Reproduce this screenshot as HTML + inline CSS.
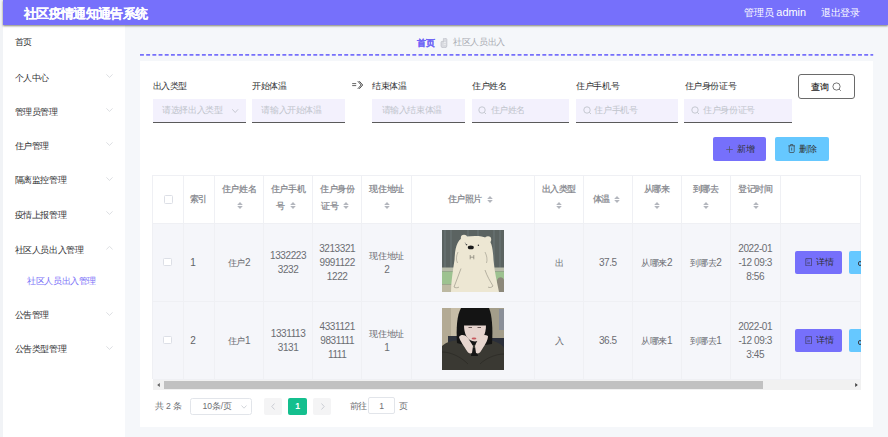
<!DOCTYPE html>
<html><head><meta charset="utf-8">
<style>
*{margin:0;padding:0;box-sizing:border-box;}
html,body{width:888px;height:437px;overflow:hidden;background:#f5f7fa;font-family:"Liberation Sans",sans-serif;}
.abs{position:absolute;}
#strip{left:0;top:0;width:2.7px;height:437px;background:#f1f3f6;}
#side{left:2.7px;top:0;width:122.6px;height:437px;background:#fff;}
#hdr{left:2.7px;top:0;width:885.3px;height:24.8px;background:#7670fb;box-shadow:0 1px 2px rgba(30,30,0,.55);z-index:5;}
#hdr .t{position:absolute;left:21.2px;top:4.6px;font-size:12.6px;letter-spacing:-0.67px;font-weight:bold;-webkit-text-stroke:0.12px #fff;color:#fff;line-height:18px;white-space:nowrap;}
#hdr .r{position:absolute;top:4px;font-size:9.87px;color:#fff;line-height:17px;white-space:nowrap;}
.mi{position:absolute;left:14.6px;font-size:9.1px;letter-spacing:-0.37px;color:#303133;line-height:12px;white-space:nowrap;}
.chev{position:absolute;left:106.4px;}
#card{left:140.2px;top:61.3px;width:732.6px;height:365.3px;background:#fff;}
.lbl{position:absolute;top:80.3px;font-size:8.63px;letter-spacing:-0.37px;color:#303133;line-height:12px;white-space:nowrap;}
.inp{position:absolute;top:98.5px;height:24.3px;background:#f3f1fd;border-bottom:1.2px solid #5a5a5a;}
.ph{position:absolute;top:104.3px;font-size:8.63px;letter-spacing:-0.37px;color:#c0c4cc;line-height:12px;white-space:nowrap;}
.cj{letter-spacing:-0.37px;}
</style></head><body>
<div id="strip" class="abs"></div>
<div id="side" class="abs"></div>
<div id="hdr" class="abs">
  <div class="t">社区疫情通知通告系统</div>
  <div class="r" style="left:741.3px"><span style="letter-spacing:-0.13px;font-size:10.2px">管理员</span> <span style="font-size:10.9px">admin</span></div>
  <div class="r" style="left:818px;letter-spacing:-0.13px;font-size:10.2px">退出登录</div>
</div>
<!-- sidebar menu -->
<div class="mi" style="top:36.3px">首页</div>
<div class="mi" style="top:71.5px">个人中心</div>
<div class="mi" style="top:105.5px">管理员管理</div>
<div class="mi" style="top:139.8px">住户管理</div>
<div class="mi" style="top:174.3px">隔离监控管理</div>
<div class="mi" style="top:208.7px">疫情上报管理</div>
<div class="mi" style="top:243.7px">社区人员出入管理</div>
<div class="mi" style="top:275.1px;left:27px;color:#7a70f8">社区人员出入管理</div>
<div class="mi" style="top:309.4px">公告管理</div>
<div class="mi" style="top:343.0px">公告类型管理</div>
<svg class="chev" style="top:73.5px" width="7" height="4" viewBox="0 0 7 4"><path d="M0.4 0.4 L3.5 3.4 L6.6 0.4" fill="none" stroke="#cfd1d6" stroke-width="0.7"/></svg>
<svg class="chev" style="top:107.9px" width="7" height="4" viewBox="0 0 7 4"><path d="M0.4 0.4 L3.5 3.4 L6.6 0.4" fill="none" stroke="#cfd1d6" stroke-width="0.7"/></svg>
<svg class="chev" style="top:142.3px" width="7" height="4" viewBox="0 0 7 4"><path d="M0.4 0.4 L3.5 3.4 L6.6 0.4" fill="none" stroke="#cfd1d6" stroke-width="0.7"/></svg>
<svg class="chev" style="top:176.8px" width="7" height="4" viewBox="0 0 7 4"><path d="M0.4 0.4 L3.5 3.4 L6.6 0.4" fill="none" stroke="#cfd1d6" stroke-width="0.7"/></svg>
<svg class="chev" style="top:211.2px" width="7" height="4" viewBox="0 0 7 4"><path d="M0.4 0.4 L3.5 3.4 L6.6 0.4" fill="none" stroke="#cfd1d6" stroke-width="0.7"/></svg>
<svg class="chev" style="top:246.2px" width="7" height="4" viewBox="0 0 7 4"><path d="M0.4 3.4 L3.5 0.4 L6.6 3.4" fill="none" stroke="#cfd1d6" stroke-width="0.7"/></svg>
<svg class="chev" style="top:311.9px" width="7" height="4" viewBox="0 0 7 4"><path d="M0.4 0.4 L3.5 3.4 L6.6 0.4" fill="none" stroke="#cfd1d6" stroke-width="0.7"/></svg>
<svg class="chev" style="top:345.5px" width="7" height="4" viewBox="0 0 7 4"><path d="M0.4 0.4 L3.5 3.4 L6.6 0.4" fill="none" stroke="#cfd1d6" stroke-width="0.7"/></svg>

<!-- breadcrumb -->
<div class="abs" style="left:417.2px;top:36.6px;font-size:8.63px;letter-spacing:-0.37px;line-height:12px;color:#7066f6;font-weight:bold;-webkit-text-stroke:0.15px #7066f6">首页</div>
<svg class="abs" style="left:440px;top:37.6px" width="8" height="10.2" viewBox="0 0 8 10.2"><path d="M3.4 0.6 Q3.4 0.2 4.6 0.2 Q6.9 0.2 6.9 1.5 V8 Q6.9 9.9 4 9.9 Q1 9.9 1 8 V4.4 Q1 3.3 2.2 3.3 Q3.4 3.3 3.4 4.2 Z" fill="#d9dbe0" stroke="#b8bbc2" stroke-width="0.6"/><path d="M3.6 4.5 H5.8 M3.6 6.4 H5.8" stroke="#f4f5f8" stroke-width="0.7"/></svg>
<div class="abs" style="left:453px;top:36.3px;font-size:8.63px;letter-spacing:-0.37px;line-height:12px;color:#a8abb2">社区人员出入</div>
<svg class="abs" style="left:140.1px;top:53px" width="734" height="4" viewBox="0 0 734 4"><line x1="0" y1="1.8" x2="733.2" y2="1.8" stroke="#7670fb" stroke-width="1.7" stroke-dasharray="3.9 2.29"/></svg>

<div id="card" class="abs"></div>
<!-- form -->
<div class="lbl" style="left:152.5px">出入类型</div>
<div class="lbl" style="left:252px">开始体温</div>
<svg class="abs" style="left:351px;top:80px" width="14" height="10" viewBox="0 0 14 10"><path d="M1.2 3.6 H5.2 M1.2 5.6 H5.2" stroke="#555" stroke-width="0.9"/><path d="M6.8 1.2 L10.2 5 L6.8 8.8 M8.3 1.2 L11.7 5 L8.3 8.8" fill="none" stroke="#3c3c3c" stroke-width="0.9"/></svg>
<div class="lbl" style="left:372px">结束体温</div>
<div class="lbl" style="left:472px">住户姓名</div>
<div class="lbl" style="left:576px">住户手机号</div>
<div class="lbl" style="left:684.5px">住户身份证号</div>
<div class="inp" style="left:152.5px;width:93.5px"></div>
<div class="inp" style="left:252px;width:93px"></div>
<div class="inp" style="left:372px;width:93.4px"></div>
<div class="inp" style="left:472px;width:97.4px"></div>
<div class="inp" style="left:575.8px;width:102.4px"></div>
<div class="inp" style="left:684.4px;width:107.6px"></div>
<div class="ph" style="left:162px">请选择出入类型</div>
<div class="ph" style="left:261.3px">请输入开始体温</div>
<div class="ph" style="left:381.6px">请输入结束体温</div>
<div class="ph" style="left:490.6px">住户姓名</div>
<div class="ph" style="left:594.4px">住户手机号</div>
<div class="ph" style="left:703px">住户身份证号</div>
<!-- form icons -->
<svg class="abs" style="left:232.4px;top:108.6px" width="6.4" height="4" viewBox="0 0 6.4 4"><path d="M0.3 0.3 L3.2 3.5 L6.1 0.3" fill="none" stroke="#b4b7bf" stroke-width="0.7"/></svg>
<svg class="abs" style="left:478px;top:105.5px" width="9" height="9" viewBox="0 0 9 9"><circle cx="4" cy="4" r="3.2" fill="none" stroke="#c0c4cc" stroke-width="0.9"/><path d="M6.3 6.3 L8 8" stroke="#c0c4cc" stroke-width="0.9"/></svg>
<svg class="abs" style="left:582.5px;top:105.5px" width="9" height="9" viewBox="0 0 9 9"><circle cx="4" cy="4" r="3.2" fill="none" stroke="#c0c4cc" stroke-width="0.9"/><path d="M6.3 6.3 L8 8" stroke="#c0c4cc" stroke-width="0.9"/></svg>
<svg class="abs" style="left:691px;top:105.5px" width="9" height="9" viewBox="0 0 9 9"><circle cx="4" cy="4" r="3.2" fill="none" stroke="#c0c4cc" stroke-width="0.9"/><path d="M6.3 6.3 L8 8" stroke="#c0c4cc" stroke-width="0.9"/></svg>
<!-- query button -->
<div class="abs" style="left:798.3px;top:73.8px;width:56.5px;height:24.9px;border:1.1px solid #6a6a6a;border-radius:3px;background:#fff"></div>
<div class="abs" style="left:811px;top:80.7px;font-size:8.63px;letter-spacing:-0.37px;line-height:12px;color:#222;-webkit-text-stroke:0.15px #222">查询</div>
<svg class="abs" style="left:832px;top:81.5px" width="10" height="10" viewBox="0 0 10 10"><circle cx="4.5" cy="4.5" r="3.6" fill="none" stroke="#4a4a4a" stroke-width="0.75"/><path d="M7.1 7.1 L8.8 8.8" stroke="#4a4a4a" stroke-width="0.75"/></svg>
<!-- add / delete -->
<div class="abs" style="left:712.7px;top:137.3px;width:53.7px;height:23.4px;background:#7670fb;border-radius:2px"></div>
<div class="abs" style="left:775.2px;top:137.3px;width:53.8px;height:23.4px;background:#66c8ff;border-radius:2px"></div>
<svg class="abs" style="left:725.8px;top:145.5px" width="7" height="7" viewBox="0 0 7 7"><path d="M3.5 0.2 V6.8 M0.2 3.5 H6.8" stroke="#505050" stroke-width="0.65"/></svg>
<div class="abs" style="left:736.9px;top:143px;font-size:8.63px;letter-spacing:-0.37px;line-height:12px;color:#303133">新增</div>
<svg class="abs" style="left:787.7px;top:144.2px" width="7.4" height="9" viewBox="0 0 7.4 9"><path d="M0.4 1.8 H7 M2.6 1.8 V0.5 H4.8 V1.8 M1.2 1.8 V7.6 Q1.2 8.5 2 8.5 H5.4 Q6.2 8.5 6.2 7.6 V1.8 M3.7 3.6 V6.6" fill="none" stroke="#3a3a3a" stroke-width="0.7"/></svg>
<div class="abs" style="left:799px;top:143px;font-size:8.63px;letter-spacing:-0.37px;line-height:12px;color:#303133">删除</div>
<div class="abs" style="left:152.6px;top:174.7px;width:708.0px;height:48.3px;background:#fff;border-top:1px solid #eff0f4"></div>
<div class="abs" style="left:152.6px;top:223.0px;width:708.0px;height:156.4px;background:#f5f6fa"></div>
<div class="abs" style="left:152.6px;top:222.5px;width:708.0px;height:1px;background:#eff0f4"></div>
<div class="abs" style="left:152.6px;top:300.8px;width:708.0px;height:1px;background:#eff0f4"></div>
<div class="abs" style="left:152.6px;top:378.9px;width:708.0px;height:1px;background:#eff0f4"></div>
<div class="abs" style="left:152.1px;top:174.7px;width:1px;height:204.7px;background:#eff0f4"></div>
<div class="abs" style="left:182.7px;top:174.7px;width:1px;height:204.7px;background:#eff0f4"></div>
<div class="abs" style="left:213.9px;top:174.7px;width:1px;height:204.7px;background:#eff0f4"></div>
<div class="abs" style="left:263.2px;top:174.7px;width:1px;height:204.7px;background:#eff0f4"></div>
<div class="abs" style="left:312.0px;top:174.7px;width:1px;height:204.7px;background:#eff0f4"></div>
<div class="abs" style="left:361.4px;top:174.7px;width:1px;height:204.7px;background:#eff0f4"></div>
<div class="abs" style="left:411.1px;top:174.7px;width:1px;height:204.7px;background:#eff0f4"></div>
<div class="abs" style="left:533.8px;top:174.7px;width:1px;height:204.7px;background:#eff0f4"></div>
<div class="abs" style="left:582.9px;top:174.7px;width:1px;height:204.7px;background:#eff0f4"></div>
<div class="abs" style="left:631.8px;top:174.7px;width:1px;height:204.7px;background:#eff0f4"></div>
<div class="abs" style="left:680.7px;top:174.7px;width:1px;height:204.7px;background:#eff0f4"></div>
<div class="abs" style="left:729.9px;top:174.7px;width:1px;height:204.7px;background:#eff0f4"></div>
<div class="abs" style="left:779.5px;top:174.7px;width:1px;height:204.7px;background:#eff0f4"></div>
<div class="abs" style="left:860.1px;top:174.7px;width:1px;height:204.7px;background:#eff0f4"></div>
<div class="abs" style="left:164.3px;top:195.0px;width:8.6px;height:8.6px;border:1px solid #dcdfe6;border-radius:1.5px;background:#fff"></div>
<div class="abs" style="left:189.7px;top:192.8px;font-size:8.63px;line-height:12px;color:#7f8288;font-weight:500;-webkit-text-stroke:0.22px #84878d;letter-spacing:-0.37px;white-space:nowrap">索引</div>
<div class="abs" style="left:214.4px;top:183.1px;width:49.3px;text-align:center;font-size:10.0px;letter-spacing:-0.4px;line-height:12px;color:#7f8288;font-weight:500;-webkit-text-stroke:0.22px #84878d;white-space:nowrap"><span style="font-size:9.1px;letter-spacing:-0.37px;">住户姓名</span></div>
<svg class="abs" style="left:236.5px;top:202.3px" width="6" height="7" viewBox="0 0 6 7"><path d="M3 0 L5.8 2.9 H0.2 Z M3 7 L5.8 4.1 H0.2 Z" fill="#b3b6bd"/></svg>
<div class="abs" style="left:263.7px;top:183.1px;width:48.8px;text-align:center;font-size:10.0px;letter-spacing:-0.4px;line-height:12px;color:#7f8288;font-weight:500;-webkit-text-stroke:0.22px #84878d;white-space:nowrap"><span style="font-size:9.1px;letter-spacing:-0.37px;">住户手机</span></div>
<div class="abs" style="left:276.4px;top:199.5px;font-size:8.63px;line-height:12px;color:#7f8288;font-weight:500;-webkit-text-stroke:0.22px #84878d;letter-spacing:-0.37px;white-space:nowrap">号</div>
<svg class="abs" style="left:289.8px;top:202.3px" width="6" height="7" viewBox="0 0 6 7"><path d="M3 0 L5.8 2.9 H0.2 Z M3 7 L5.8 4.1 H0.2 Z" fill="#b3b6bd"/></svg>
<div class="abs" style="left:312.5px;top:183.1px;width:49.4px;text-align:center;font-size:10.0px;letter-spacing:-0.4px;line-height:12px;color:#7f8288;font-weight:500;-webkit-text-stroke:0.22px #84878d;white-space:nowrap"><span style="font-size:9.1px;letter-spacing:-0.37px;">住户身份</span></div>
<div class="abs" style="left:321.2px;top:199.5px;font-size:8.63px;line-height:12px;color:#7f8288;font-weight:500;-webkit-text-stroke:0.22px #84878d;letter-spacing:-0.37px;white-space:nowrap">证号</div>
<svg class="abs" style="left:343.2px;top:202.3px" width="6" height="7" viewBox="0 0 6 7"><path d="M3 0 L5.8 2.9 H0.2 Z M3 7 L5.8 4.1 H0.2 Z" fill="#b3b6bd"/></svg>
<div class="abs" style="left:361.9px;top:183.1px;width:49.7px;text-align:center;font-size:10.0px;letter-spacing:-0.4px;line-height:12px;color:#7f8288;font-weight:500;-webkit-text-stroke:0.22px #84878d;white-space:nowrap"><span style="font-size:9.1px;letter-spacing:-0.37px;">现住地址</span></div>
<svg class="abs" style="left:384.1px;top:202.3px" width="6" height="7" viewBox="0 0 6 7"><path d="M3 0 L5.8 2.9 H0.2 Z M3 7 L5.8 4.1 H0.2 Z" fill="#b3b6bd"/></svg>
<div class="abs" style="left:534.3px;top:183.1px;width:49.1px;text-align:center;font-size:10.0px;letter-spacing:-0.4px;line-height:12px;color:#7f8288;font-weight:500;-webkit-text-stroke:0.22px #84878d;white-space:nowrap"><span style="font-size:9.1px;letter-spacing:-0.37px;">出入类型</span></div>
<svg class="abs" style="left:556.2px;top:202.3px" width="6" height="7" viewBox="0 0 6 7"><path d="M3 0 L5.8 2.9 H0.2 Z M3 7 L5.8 4.1 H0.2 Z" fill="#b3b6bd"/></svg>
<div class="abs" style="left:632.3px;top:183.1px;width:48.9px;text-align:center;font-size:10.0px;letter-spacing:-0.4px;line-height:12px;color:#7f8288;font-weight:500;-webkit-text-stroke:0.22px #84878d;white-space:nowrap"><span style="font-size:9.1px;letter-spacing:-0.37px;">从哪来</span></div>
<svg class="abs" style="left:654.1px;top:202.3px" width="6" height="7" viewBox="0 0 6 7"><path d="M3 0 L5.8 2.9 H0.2 Z M3 7 L5.8 4.1 H0.2 Z" fill="#b3b6bd"/></svg>
<div class="abs" style="left:681.2px;top:183.1px;width:49.2px;text-align:center;font-size:10.0px;letter-spacing:-0.4px;line-height:12px;color:#7f8288;font-weight:500;-webkit-text-stroke:0.22px #84878d;white-space:nowrap"><span style="font-size:9.1px;letter-spacing:-0.37px;">到哪去</span></div>
<svg class="abs" style="left:703.2px;top:202.3px" width="6" height="7" viewBox="0 0 6 7"><path d="M3 0 L5.8 2.9 H0.2 Z M3 7 L5.8 4.1 H0.2 Z" fill="#b3b6bd"/></svg>
<div class="abs" style="left:730.4px;top:183.1px;width:49.6px;text-align:center;font-size:10.0px;letter-spacing:-0.4px;line-height:12px;color:#7f8288;font-weight:500;-webkit-text-stroke:0.22px #84878d;white-space:nowrap"><span style="font-size:9.1px;letter-spacing:-0.37px;">登记时间</span></div>
<svg class="abs" style="left:752.6px;top:202.3px" width="6" height="7" viewBox="0 0 6 7"><path d="M3 0 L5.8 2.9 H0.2 Z M3 7 L5.8 4.1 H0.2 Z" fill="#b3b6bd"/></svg>
<div class="abs" style="left:447.5px;top:192.8px;font-size:8.63px;line-height:12px;color:#7f8288;font-weight:500;-webkit-text-stroke:0.22px #84878d;letter-spacing:-0.37px;white-space:nowrap">住户照片</div>
<svg class="abs" style="left:486.9px;top:195.7px" width="6" height="7" viewBox="0 0 6 7"><path d="M3 0 L5.8 2.9 H0.2 Z M3 7 L5.8 4.1 H0.2 Z" fill="#b3b6bd"/></svg>
<div class="abs" style="left:592.5px;top:192.8px;font-size:8.63px;line-height:12px;color:#7f8288;font-weight:500;-webkit-text-stroke:0.22px #84878d;letter-spacing:-0.37px;white-space:nowrap">体温</div>
<svg class="abs" style="left:613.9px;top:195.7px" width="6" height="7" viewBox="0 0 6 7"><path d="M3 0 L5.8 2.9 H0.2 Z M3 7 L5.8 4.1 H0.2 Z" fill="#b3b6bd"/></svg>
<div class="abs" style="left:163.2px;top:257.6px;width:8.6px;height:8.6px;border:1px solid #dcdfe6;border-radius:1.5px;background:#fff"></div>
<div class="abs" style="left:190.3px;top:257.1px;font-size:10.0px;line-height:12px;color:#606266">1</div>
<div class="abs" style="left:214.4px;top:255.6px;width:49.3px;text-align:center;font-size:10.0px;letter-spacing:-0.4px;line-height:14.0px;color:#6b6d72;white-space:nowrap"><span style="font-size:9.1px;letter-spacing:-0.37px;">住户</span>2</div>
<div class="abs" style="left:263.7px;top:248.6px;width:48.8px;text-align:center;font-size:10.0px;letter-spacing:-0.4px;line-height:14.0px;color:#6b6d72;white-space:nowrap">1332223<br>3232</div>
<div class="abs" style="left:312.5px;top:241.6px;width:49.4px;text-align:center;font-size:10.0px;letter-spacing:-0.4px;line-height:14.0px;color:#6b6d72;white-space:nowrap">3213321<br>9991122<br>1222</div>
<div class="abs" style="left:361.9px;top:248.6px;width:49.7px;text-align:center;font-size:10.0px;letter-spacing:-0.4px;line-height:14.0px;color:#6b6d72;white-space:nowrap"><span style="font-size:9.1px;letter-spacing:-0.37px;">现住地址</span><br>2</div>
<svg class="abs" style="left:442.2px;top:229.5px" width="62" height="62" viewBox="0 0 62 62">
<rect width="62" height="62" fill="#5b6361"/>
<path d="M3 0V38 M9 0V38 M26 0V8 M36 0V8 M52 0V38 M58 0V38" stroke="#667070" stroke-width="1.6"/>
<rect x="0" y="37.5" width="62" height="4" fill="#b9bcaa"/>
<rect x="0" y="41.5" width="62" height="13" fill="#9dc290"/>
<rect x="0" y="54.5" width="62" height="7.5" fill="#bdb9a2"/>
<path d="M55 62 V50 C57 46 61 47 62 50 V62 Z" fill="#8c887a"/>
<circle cx="22" cy="8" r="3.2" fill="#ede7d3"/><circle cx="46" cy="9.5" r="3.2" fill="#ede7d3"/>
<path d="M9 62 C9 52 11 40 12.5 30 C13 18 15 8 24 6.5 C32 5.5 40 5.5 45 8 C50 11 51 20 51.5 30 C52.5 42 55 52 57 62 Z" fill="#ede7d3"/>
<ellipse cx="28.8" cy="17.4" rx="3" ry="1.9" fill="#1a1a1a"/>
<circle cx="24.6" cy="14.6" r="0.7" fill="#333"/><circle cx="36.4" cy="15.2" r="0.7" fill="#333"/>
<path d="M23 12.5 L24.5 15.5" stroke="#666" stroke-width="0.5"/>
<path d="M28.2 25 V29.3 M31.8 25 V29.3 M28.2 27.2 H31.8" stroke="#6b6a60" stroke-width="0.6"/>
<path d="M16 22 C14 26 14 30 15.5 33 M43 22 C45 26 45.5 30 44.5 33" fill="none" stroke="#9b978a" stroke-width="0.6"/>
<path d="M19 38.5 C17 45 14 51 12 57 C13 58 16 58 17 57 M43 40 C45 46 48 51 51 56 C50 57.5 47 58 46 57" fill="none" stroke="#8f8b7e" stroke-width="0.6"/>
</svg>
<div class="abs" style="left:534.3px;top:255.6px;width:49.1px;text-align:center;font-size:10.0px;letter-spacing:-0.4px;line-height:14.0px;color:#6b6d72;white-space:nowrap"><span style="font-size:9.1px;letter-spacing:-0.37px;">出</span></div>
<div class="abs" style="left:583.4px;top:255.6px;width:48.9px;text-align:center;font-size:10.0px;letter-spacing:-0.4px;line-height:14.0px;color:#6b6d72;white-space:nowrap">37.5</div>
<div class="abs" style="left:632.3px;top:255.6px;width:48.9px;text-align:center;font-size:10.0px;letter-spacing:-0.4px;line-height:14.0px;color:#6b6d72;white-space:nowrap"><span style="font-size:9.1px;letter-spacing:-0.37px;">从哪来</span>2</div>
<div class="abs" style="left:681.2px;top:255.6px;width:49.2px;text-align:center;font-size:10.0px;letter-spacing:-0.4px;line-height:14.0px;color:#6b6d72;white-space:nowrap"><span style="font-size:9.1px;letter-spacing:-0.37px;">到哪去</span>2</div>
<div class="abs" style="left:730.4px;top:241.6px;width:49.6px;text-align:center;font-size:10.0px;letter-spacing:-0.4px;line-height:14.0px;color:#6b6d72;white-space:nowrap">2022-01<br>-12 09:3<br>8:56</div>
<div class="abs" style="left:795.1px;top:250.8px;width:47.4px;height:22.8px;background:#7670fb;border-radius:2px"></div>
<svg class="abs" style="left:804.8px;top:257.8px" width="7.4" height="8.4" viewBox="0 0 7.4 8.4"><path d="M0.8 0.6 H6.6 V7.8 H0.8 Z" fill="none" stroke="#3d3a5a" stroke-width="0.7"/><path d="M2.2 2.2 H3.2 M2.2 4.4 H5 M2.2 5.6 H5" stroke="#4a4670" stroke-width="0.6"/></svg>
<div class="abs" style="left:816px;top:256.1px;font-size:8.63px;line-height:12px;color:#303133;letter-spacing:-0.37px;white-space:nowrap">详情</div>
<div class="abs" style="left:848.7px;top:250.8px;width:11.9px;height:22.8px;background:#66c8ff;border-radius:2px 0 0 2px;overflow:hidden"><div style="position:absolute;left:9.6px;top:10.6px;width:4px;height:5px;border:0.9px solid #3a3f48;border-radius:2px"></div></div>
<div class="abs" style="left:163.2px;top:335.9px;width:8.6px;height:8.6px;border:1px solid #dcdfe6;border-radius:1.5px;background:#fff"></div>
<div class="abs" style="left:190.3px;top:335.4px;font-size:10.0px;line-height:12px;color:#606266">2</div>
<div class="abs" style="left:214.4px;top:333.9px;width:49.3px;text-align:center;font-size:10.0px;letter-spacing:-0.4px;line-height:14.0px;color:#6b6d72;white-space:nowrap"><span style="font-size:9.1px;letter-spacing:-0.37px;">住户</span>1</div>
<div class="abs" style="left:263.7px;top:326.9px;width:48.8px;text-align:center;font-size:10.0px;letter-spacing:-0.4px;line-height:14.0px;color:#6b6d72;white-space:nowrap">1331113<br>3131</div>
<div class="abs" style="left:312.5px;top:319.9px;width:49.4px;text-align:center;font-size:10.0px;letter-spacing:-0.4px;line-height:14.0px;color:#6b6d72;white-space:nowrap">4331121<br>9831111<br>1111</div>
<div class="abs" style="left:361.9px;top:326.9px;width:49.7px;text-align:center;font-size:10.0px;letter-spacing:-0.4px;line-height:14.0px;color:#6b6d72;white-space:nowrap"><span style="font-size:9.1px;letter-spacing:-0.37px;">现住地址</span><br>1</div>
<svg class="abs" style="left:442.2px;top:307.8px" width="62" height="62" viewBox="0 0 62 62">
<rect width="62" height="62" fill="#b3aa94"/>
<rect x="9" y="0" width="12" height="34" fill="#c6bca6"/>
<rect x="46" y="0" width="16" height="36" fill="#a39d8a"/>
<rect x="57" y="1" width="5" height="21" fill="#8a8f98"/>
<rect x="48" y="30" width="14" height="14" fill="#2b2f3a"/>
<rect x="6" y="28" width="12" height="8" fill="#2f333c"/>
<path d="M0 62 V38 C4 34 10 33 16 32 L46 32 C54 33 60 36 62 40 V62 Z" fill="#3a3933"/>
<path d="M15 35 C14 20 15 7 19 0 L47 0 C50 7 51 20 50 36 L43 37 L22 37 Z" fill="#141414"/>
<path d="M22 17 C22 26 25 33 33 33.5 C41 33 44 26 44 17 Z" fill="#e6d4ce"/>
<rect x="21" y="4" width="24" height="13.5" fill="#141414"/>
<path d="M26.5 19.5 H30 M35.5 19.5 H39" stroke="#5a4a48" stroke-width="0.9"/>
<ellipse cx="32" cy="30.5" rx="2.4" ry="0.9" fill="#c85a60"/>
<path d="M34 40 L30 40 L29 48 L36 48 Z" fill="#151515"/>
<path d="M17 29 C19 26 23 27 25 29 C27 31 29 35 31 38 L30 45 C28 46 26 45 25 43 C22 38 18 33 17 29 Z" fill="#e7d6cf"/>
<path d="M46 28 C43 26 40 27 38 29 C36 31 34 35 33 38 L34 45 C36 46 38 45 39 43 C42 38 46 33 46 28 Z" fill="#e7d6cf"/>
<path d="M0 44 C8 44 18 48 26 56 M62 46 C54 46 44 50 38 56" fill="none" stroke="#2c2b26" stroke-width="0.8"/>
</svg>
<div class="abs" style="left:534.3px;top:333.9px;width:49.1px;text-align:center;font-size:10.0px;letter-spacing:-0.4px;line-height:14.0px;color:#6b6d72;white-space:nowrap"><span style="font-size:9.1px;letter-spacing:-0.37px;">入</span></div>
<div class="abs" style="left:583.4px;top:333.9px;width:48.9px;text-align:center;font-size:10.0px;letter-spacing:-0.4px;line-height:14.0px;color:#6b6d72;white-space:nowrap">36.5</div>
<div class="abs" style="left:632.3px;top:333.9px;width:48.9px;text-align:center;font-size:10.0px;letter-spacing:-0.4px;line-height:14.0px;color:#6b6d72;white-space:nowrap"><span style="font-size:9.1px;letter-spacing:-0.37px;">从哪来</span>1</div>
<div class="abs" style="left:681.2px;top:333.9px;width:49.2px;text-align:center;font-size:10.0px;letter-spacing:-0.4px;line-height:14.0px;color:#6b6d72;white-space:nowrap"><span style="font-size:9.1px;letter-spacing:-0.37px;">到哪去</span>1</div>
<div class="abs" style="left:730.4px;top:319.9px;width:49.6px;text-align:center;font-size:10.0px;letter-spacing:-0.4px;line-height:14.0px;color:#6b6d72;white-space:nowrap">2022-01<br>-12 09:3<br>3:45</div>
<div class="abs" style="left:795.1px;top:329.1px;width:47.4px;height:22.8px;background:#7670fb;border-radius:2px"></div>
<svg class="abs" style="left:804.8px;top:336.1px" width="7.4" height="8.4" viewBox="0 0 7.4 8.4"><path d="M0.8 0.6 H6.6 V7.8 H0.8 Z" fill="none" stroke="#3d3a5a" stroke-width="0.7"/><path d="M2.2 2.2 H3.2 M2.2 4.4 H5 M2.2 5.6 H5" stroke="#4a4670" stroke-width="0.6"/></svg>
<div class="abs" style="left:816px;top:334.4px;font-size:8.63px;line-height:12px;color:#303133;letter-spacing:-0.37px;white-space:nowrap">详情</div>
<div class="abs" style="left:848.7px;top:329.1px;width:11.9px;height:22.8px;background:#66c8ff;border-radius:2px 0 0 2px;overflow:hidden"><div style="position:absolute;left:9.6px;top:10.6px;width:4px;height:5px;border:0.9px solid #3a3f48;border-radius:2px"></div></div>
<div class="abs" style="left:152.6px;top:379.5px;width:708px;height:10.4px;background:#f1f1f1"></div>
<div class="abs" style="left:163.9px;top:381px;width:599px;height:7.9px;background:#c1c1c1"></div>
<svg class="abs" style="left:156.7px;top:383px" width="3" height="4" viewBox="0 0 3 4"><path d="M2.8 0.1 V3.9 L0.2 2 Z" fill="#606060"/></svg>
<svg class="abs" style="left:854.8px;top:383px" width="3" height="4" viewBox="0 0 3 4"><path d="M0.2 0.1 V3.9 L2.8 2 Z" fill="#404040"/></svg>
<div class="abs" style="left:155px;top:400.3px;font-size:8.63px;line-height:12px;color:#6e7074;white-space:nowrap"><span style="letter-spacing:-0.37px;">共</span> 2 <span style="letter-spacing:-0.37px;">条</span></div>
<div class="abs" style="left:190.3px;top:398.1px;width:61.3px;height:16.9px;border:1px solid #e2e5ea;border-radius:2.5px;background:#fff"></div>
<div class="abs" style="left:202.4px;top:400.3px;font-size:8.63px;line-height:12px;color:#6e7074;white-space:nowrap">10<span style="letter-spacing:-0.37px;">条</span><span style="letter-spacing:-0.3px">/</span><span style="letter-spacing:-0.37px;">页</span></div>
<svg class="abs" style="left:240.5px;top:404.5px" width="6" height="4" viewBox="0 0 6 4"><path d="M0.5 0.5 L3 3.2 L5.5 0.5" fill="none" stroke="#c0c4cc" stroke-width="0.7"/></svg>
<div class="abs" style="left:264px;top:397.8px;width:18px;height:17px;background:#f4f4f5;border-radius:2px"></div>
<svg class="abs" style="left:271px;top:403px" width="4" height="7" viewBox="0 0 4 7"><path d="M3.5 0.5 L0.8 3.5 L3.5 6.5" fill="none" stroke="#c0c4cc" stroke-width="0.8"/></svg>
<div class="abs" style="left:288.3px;top:397.8px;width:18.9px;height:17px;background:#14bf8e;border-radius:2px"></div>
<div class="abs" style="left:288.3px;top:400.3px;width:18.9px;text-align:center;font-size:8.63px;line-height:12px;color:#fff;font-weight:bold">1</div>
<div class="abs" style="left:313.4px;top:397.8px;width:17.7px;height:17px;background:#f4f4f5;border-radius:2px"></div>
<svg class="abs" style="left:320.5px;top:403px" width="4" height="7" viewBox="0 0 4 7"><path d="M0.5 0.5 L3.2 3.5 L0.5 6.5" fill="none" stroke="#c0c4cc" stroke-width="0.8"/></svg>
<div class="abs" style="left:349.7px;top:400.3px;font-size:8.63px;line-height:12px;color:#6e7074;letter-spacing:-0.37px;white-space:nowrap">前往</div>
<div class="abs" style="left:368px;top:397.4px;width:27.4px;height:16.8px;border:1px solid #e2e5ea;border-radius:2px;background:#fff"></div>
<div class="abs" style="left:368px;top:400.3px;width:27.4px;text-align:center;font-size:8.63px;line-height:12px;color:#6e7074">1</div>
<div class="abs" style="left:398.6px;top:400.3px;font-size:8.63px;line-height:12px;color:#6e7074;letter-spacing:-0.37px;white-space:nowrap">页</div>
</body></html>
